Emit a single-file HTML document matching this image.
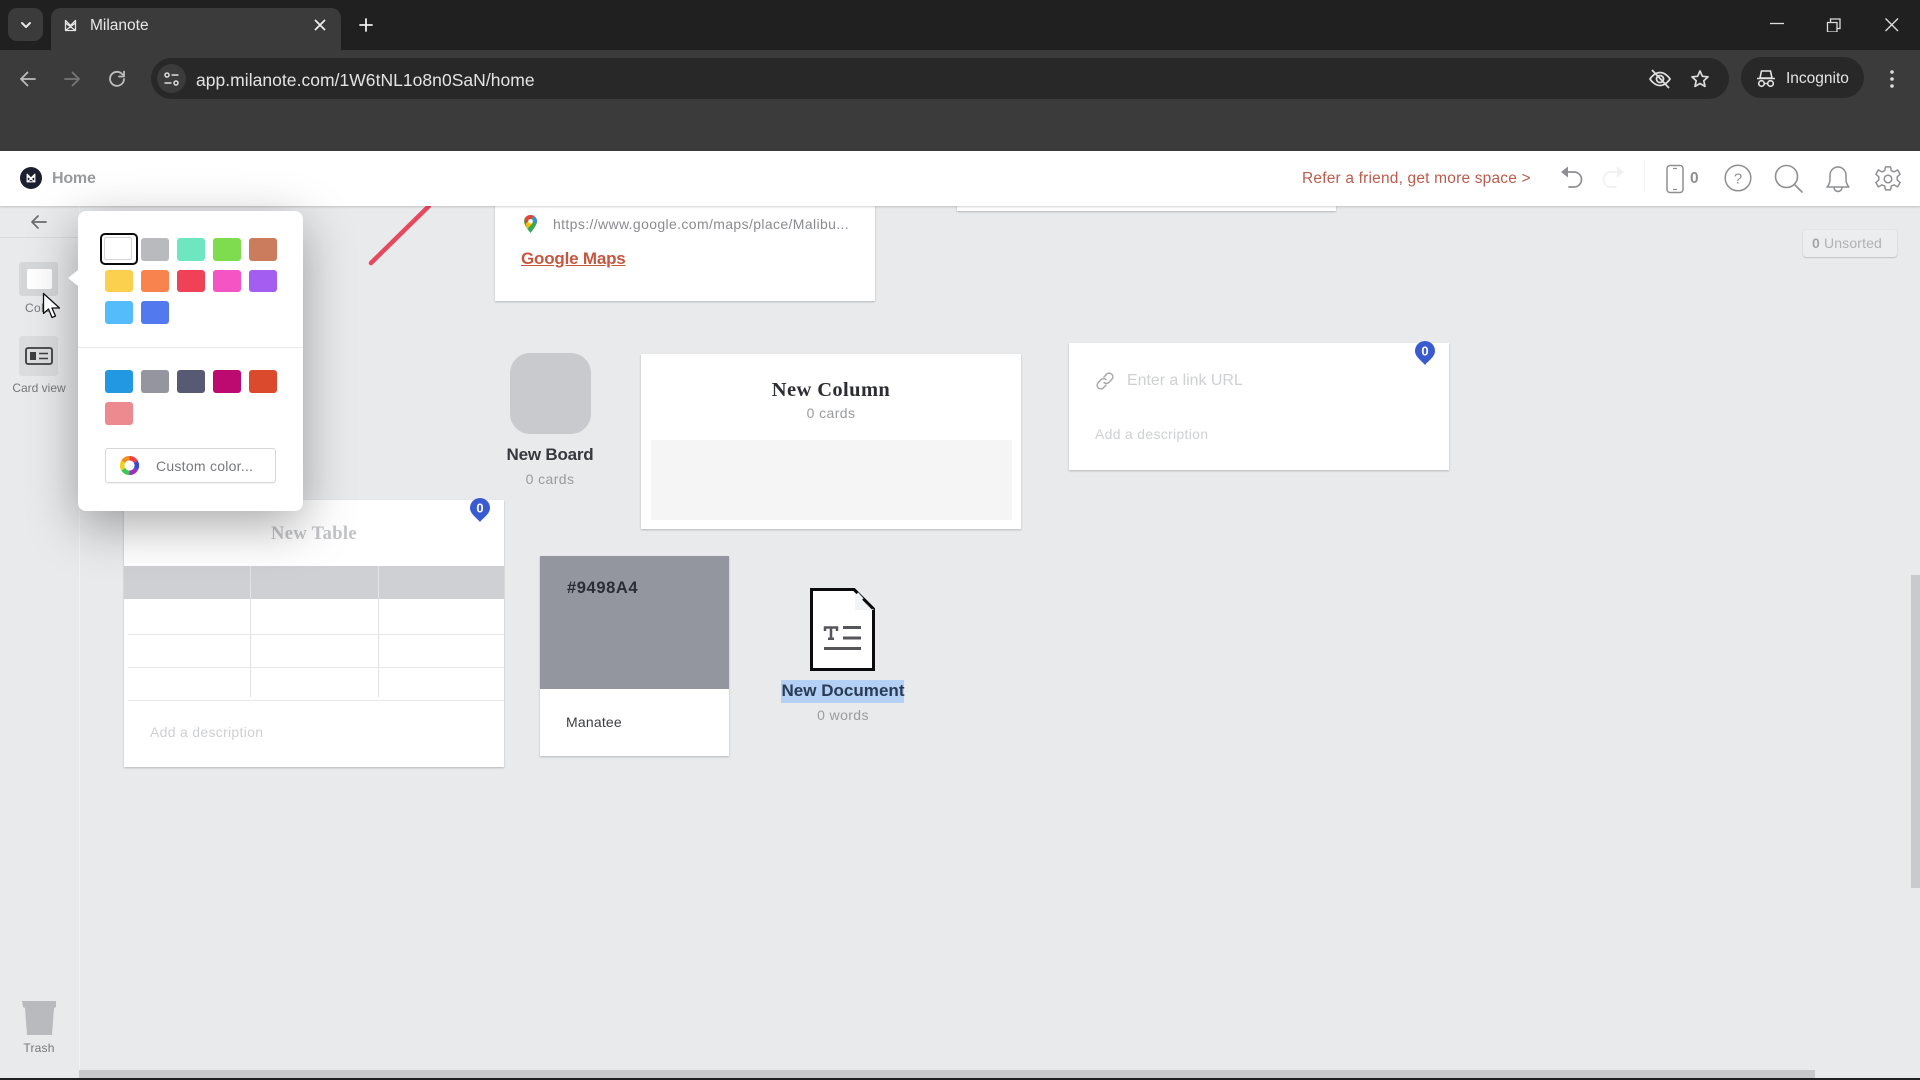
<!DOCTYPE html>
<html><head><meta charset="utf-8"><title>Milanote</title>
<style>
html,body{margin:0;padding:0;width:1920px;height:1080px;overflow:hidden;background:#e9eaec;font-family:"Liberation Sans",sans-serif}
div,span,svg{position:absolute;display:block}
.t{white-space:nowrap;line-height:20px;height:20px}
.c{text-align:center;width:300px}
.card{background:#fff;box-shadow:0 1px 2px rgba(0,0,0,.22)}
.s{width:28px;height:23px;border-radius:3px}
.sv{fill:none;stroke-linecap:round;stroke-linejoin:round}
</style></head><body>

<!-- browser chrome -->
<div style="left:0;top:0;width:1920px;height:50px;background:#202020"></div>
<div style="left:0;top:50px;width:1920px;height:101px;background:#3b3b3b"></div>
<div style="left:8px;top:8px;width:35px;height:33px;background:#3b3b3b;border-radius:9px"></div>
<div style="left:51px;top:8px;width:290px;height:44px;background:#3b3b3b;border-radius:10px 10px 0 0"></div>
<svg style="left:20px;top:19px" width="12" height="12" viewBox="0 0 12 12"><path class="sv" d="M2 4l4 4 4-4" stroke="#e6e6e6" stroke-width="2"/></svg>
<svg style="left:64px;top:19px" width="13" height="13" viewBox="0 0 13 13"><path class="sv" d="M1.500 11.500V1.500L6.500 6.500L11.500 1.500V11.500ZM1.500 11.500L11.500 4M11.500 11.500L1.500 4" stroke="#e6e6e6" stroke-width="1.300"/></svg>
<div class="t" style="left:90px;top:16px;font-size:15.500px;color:#e8e8e8">Milanote</div>
<svg style="left:313px;top:18px" width="14" height="14" viewBox="0 0 14 14"><path class="sv" d="M2.500 2.500l9 9M11.500 2.500l-9 9" stroke="#eee" stroke-width="1.800"/></svg>
<svg style="left:359px;top:18px" width="14" height="14" viewBox="0 0 14 14"><path class="sv" d="M7 1v12M1 7h12" stroke="#eee" stroke-width="1.800"/></svg>
<svg style="left:1770px;top:18px" width="130" height="14" viewBox="0 0 130 14"><path d="M0 5.500h14" stroke="#ddd" stroke-width="1.300" fill="none"/><path d="M57.500 4.500h9.500v9.500h-9.500zM60.500 4V1h9.500v9.500h-2.500" stroke="#ddd" stroke-width="1.300" fill="none"/><path d="M115.500 .5l12.500 12.500M128 .5l-12.500 12.500" stroke="#ddd" stroke-width="1.400" fill="none"/></svg>

<svg style="left:18px;top:69px" width="110" height="20" viewBox="0 0 110 20"><path class="sv" d="M17 10H3M9.500 3.500L3 10l6.500 6.500" stroke="#bdbdbd" stroke-width="1.800"/><path class="sv" d="M47 10h14M54.500 3.500L61 10l-6.500 6.500" stroke="#777" stroke-width="1.800"/><path class="sv" d="M104.500 5.500A7 7 0 1 0 106 10M106 2.500v5h-5" stroke="#bdbdbd" stroke-width="1.800"/></svg>

<div style="left:151px;top:58px;width:1578px;height:41px;background:#282828;border-radius:21px"></div>
<div style="left:157px;top:64px;width:29px;height:29px;background:#3b3b3b;border-radius:50%"></div>
<svg style="left:163px;top:71px" width="17" height="16" viewBox="0 0 17 16"><circle cx="4" cy="4" r="2" fill="none" stroke="#ddd" stroke-width="1.500"/><path d="M8.500 4h7M1.500 12h7" stroke="#ddd" stroke-width="1.500"/><circle cx="13" cy="12" r="2" fill="none" stroke="#ddd" stroke-width="1.500"/></svg>
<div class="t" style="left:196px;top:70px;font-size:17.500px;color:#e4e4e4;letter-spacing:.03px">app.milanote.com/1W6tNL1o8n0SaN/home</div>
<svg style="left:1648px;top:68px" width="24" height="22" viewBox="0 0 24 22"><path class="sv" d="M2 11s4-6.500 10-6.500S22 11 22 11s-4 6.500-10 6.500S2 11 2 11z" stroke="#ddd" stroke-width="1.800"/><circle cx="12" cy="11" r="3.500" fill="none" stroke="#ddd" stroke-width="1.800"/><path d="M4 2l17 18" stroke="#ddd" stroke-width="1.800"/></svg>
<svg style="left:1690px;top:69px" width="20" height="20" viewBox="0 0 20 20"><path class="sv" d="M10 2l2.400 5.300 5.600.6-4.200 3.800 1.200 5.700L10 14.500l-5 2.900 1.200-5.700L2 7.900l5.600-.6z" stroke="#ddd" stroke-width="1.700"/></svg>
<div style="left:1741px;top:57px;width:123px;height:41px;background:#282828;border-radius:21px"></div>
<svg style="left:1757px;top:69px" width="18" height="19" viewBox="0 0 18 19"><path d="M4.500 2h9l1.500 7H3z" fill="none" stroke="#e4e4e4" stroke-width="1.600"/><path d="M0 9.500h18" stroke="#e4e4e4" stroke-width="1.600"/><circle cx="4.500" cy="14.500" r="2.800" fill="none" stroke="#e4e4e4" stroke-width="1.600"/><circle cx="13.500" cy="14.500" r="2.800" fill="none" stroke="#e4e4e4" stroke-width="1.600"/><path d="M7.300 14.500h3.400" stroke="#e4e4e4" stroke-width="1.400"/></svg>
<div class="t" style="left:1786px;top:69px;font-size:15.500px;color:#e4e4e4">Incognito</div>
<svg style="left:1889px;top:69px" width="6" height="20" viewBox="0 0 6 20"><circle cx="3" cy="3" r="1.800" fill="#ddd"/><circle cx="3" cy="10" r="1.800" fill="#ddd"/><circle cx="3" cy="17" r="1.800" fill="#ddd"/></svg>

<!-- canvas items -->
<div style="left:79px;top:206px;width:1px;height:864px;background:#f2f3f4"></div>
<div style="left:0;top:237px;width:79px;height:1px;background:#d9dadc"></div>

<div class="card" style="left:957px;top:200px;width:379px;height:11px"></div>

<svg style="left:360px;top:200px" width="80" height="70" viewBox="0 0 80 70"><path d="M11 63L69 6" stroke="#e6485f" stroke-width="4.500" stroke-linecap="round" fill="none"/></svg>

<div class="card" style="left:495px;top:200px;width:380px;height:101px"></div>
<svg style="left:524px;top:215px" width="13" height="18" viewBox="0 0 13 18"><path d="M6.500 0C3 0 0 2.800 0 6.300 0 10.500 6.500 18 6.500 18S13 10.500 13 6.300C13 2.800 10 0 6.500 0z" fill="#3aa757"/><path d="M1 3.500C2 1.400 4 0 6.500 0c1.300 0 2.500.4 3.500 1L2 8.500C.8 7 .4 5 1 3.500z" fill="#ea4335"/><path d="M10 1c1.800 1.100 3 3 3 5.300 0 .8-.2 1.600-.5 2.400L8.500 5z" fill="#4285f4"/><path d="M2 8.500L6 5l3 3-6 6C2.500 11.700 2 10 2 8.500z" fill="#fbbc04"/><circle cx="6.500" cy="6.300" r="2.300" fill="#fff"/></svg>
<div class="t" style="left:553px;top:214px;font-size:14px;color:#8a8b8e;letter-spacing:.37px">https://www.google.com/maps/place/Malibu...</div>
<div class="t" style="left:521px;top:249px;font-size:17px;font-weight:bold;color:#c4573f;text-decoration:underline;letter-spacing:-.2px">Google Maps</div>

<div style="left:510px;top:353px;width:81px;height:81px;border-radius:20px;background:#c9cacd"></div>
<div class="t c" style="left:400px;top:445px;font-size:17px;font-weight:bold;color:#37383d;letter-spacing:-.2px">New Board</div>
<div class="t c" style="left:400px;top:469px;font-size:14px;color:#9a9b9e;letter-spacing:.4px">0 cards</div>

<div class="card" style="left:641px;top:354px;width:380px;height:175px"></div>
<div class="t c" style="left:681px;top:380px;font-family:'Liberation Serif',serif;font-size:20.500px;font-weight:bold;color:#2c2d33;letter-spacing:.4px">New Column</div>
<div class="t c" style="left:681px;top:403px;font-size:14px;color:#9a9b9e;letter-spacing:.4px">0 cards</div>
<div style="left:651px;top:440px;width:361px;height:80px;background:#f5f5f6"></div>

<div class="card" style="left:1069px;top:343px;width:380px;height:127px"></div>
<svg style="left:1095px;top:371px" width="20" height="20" viewBox="0 0 20 20"><path class="sv" d="M9 6l2.500-2.800a3.700 3.700 0 0 1 5.300 5.200L14 11.300a3.700 3.700 0 0 1-5 .2M11 14l-2.500 2.800a3.700 3.700 0 0 1-5.300-5.200L6 8.700a3.700 3.700 0 0 1 5-.2" stroke="#a9aaad" stroke-width="1.500"/></svg>
<div class="t" style="left:1127px;top:371px;font-size:16px;color:#cfd0d2;letter-spacing:-.05px">Enter a link URL</div>
<div class="t" style="left:1095px;top:424px;font-size:14px;color:#cfd0d2;letter-spacing:.3px">Add a description</div>
<svg style="left:1415px;top:341px" width="20" height="24" viewBox="0 0 20 24"><path d="M10 24C7 20 0 16 0 10a10 10 0 0 1 20 0c0 6-7 10-10 14z" fill="#3a5bd0"/><text x="10" y="14.500" text-anchor="middle" font-family="Liberation Sans" font-size="13" font-weight="bold" fill="#fff">0</text></svg>

<div class="card" style="left:124px;top:500px;width:380px;height:267px"></div>
<div class="t c" style="left:164px;top:524px;font-family:'Liberation Serif',serif;font-size:18.500px;font-weight:bold;color:#c3c4c7;letter-spacing:.35px">New Table</div>
<div style="left:124px;top:566px;width:380px;height:33px;background:#cfd0d3"></div>
<div style="left:250px;top:566px;width:1px;height:131px;background:#e2e3e4"></div>
<div style="left:378px;top:566px;width:1px;height:131px;background:#e2e3e4"></div>
<div style="left:128px;top:634px;width:376px;height:1px;background:#e6e7e8"></div>
<div style="left:128px;top:667px;width:376px;height:1px;background:#e6e7e8"></div>
<div style="left:128px;top:700px;width:376px;height:1px;background:#e6e7e8"></div>
<div class="t" style="left:150px;top:722px;font-size:14px;color:#cfd0d2;letter-spacing:.3px">Add a description</div>
<svg style="left:470px;top:498px" width="20" height="24" viewBox="0 0 20 24"><path d="M10 24C7 20 0 16 0 10a10 10 0 0 1 20 0c0 6-7 10-10 14z" fill="#3a5bd0"/><text x="10" y="14.500" text-anchor="middle" font-family="Liberation Sans" font-size="13" font-weight="bold" fill="#fff">0</text></svg>

<div class="card" style="left:540px;top:556px;width:189px;height:200px"></div>
<div style="left:540px;top:556px;width:189px;height:133px;background:#94969f"></div>
<div class="t" style="left:567px;top:578px;font-size:16.500px;font-weight:bold;color:#2b2d36;letter-spacing:.6px">#9498A4</div>
<div class="t" style="left:566px;top:712px;font-size:14px;color:#3c3d42;letter-spacing:.2px">Manatee</div>

<svg style="left:808px;top:586px" width="70" height="87" viewBox="0 0 70 87"><path d="M3.500 3.500H46L65.500 23V83.500H3.500Z" fill="#fff" stroke="#0c0c0e" stroke-width="3"/><path d="M47 3L47 24L66 24Z" fill="#f2f3f4"/><path d="M46 3.500L65.500 23" stroke="#0c0c0e" stroke-width="3" stroke-dasharray="5 8 14"/><path d="M17 45V41.500H29V45M23 41.500V52.500M20 52.800H26" stroke="#55565a" stroke-width="2.500" fill="none"/><path d="M35 41.500H53M35 52H53M16 62.500H53" stroke="#55565a" stroke-width="3" fill="none"/></svg>
<div style="left:781px;top:680px;width:123px;height:23px;background:#b4d0f5"></div>
<div class="t c" style="left:693px;top:681px;font-size:17px;font-weight:bold;color:#2a3b55;letter-spacing:.02px">New Document</div>
<div class="t c" style="left:693px;top:705px;font-size:14px;color:#9a9b9e;letter-spacing:.4px">0 words</div>

<div style="left:1803px;top:230px;width:94px;height:27px;background:#ecedef;border-radius:3px;box-shadow:0 1px 1px rgba(0,0,0,.15),0 0 0 1px #e3e4e6"></div>
<div class="t" style="left:1812px;top:233px;font-size:14px;color:#b0b1b4;letter-spacing:.15px"><b style="color:#a5a6a9">0</b> Unsorted</div>

<!-- scrollbars -->
<div style="left:1911px;top:575px;width:9px;height:313px;background:#c9cacd"></div>
<div style="left:79px;top:1070px;width:1736px;height:8px;background:#c8c9cb"></div>
<div style="left:0;top:1078px;width:1920px;height:2px;background:#202020"></div>

<!-- header -->
<div style="left:0;top:151px;width:1920px;height:55px;background:#fff;box-shadow:0 1px 2px rgba(0,0,0,.18)"></div>
<div style="left:20px;top:167px;width:22px;height:22px;border-radius:50%;background:#1c1f2e"></div>
<svg style="left:26px;top:173px" width="10" height="10" viewBox="0 0 13 13"><path class="sv" d="M1.500 11.500V1.500L6.500 6.500L11.500 1.500V11.500ZM1.500 11.500L11.500 4M11.500 11.500L1.500 4" stroke="#fff" stroke-width="1.500"/></svg>
<div class="t" style="left:52px;top:168.500px;font-size:16px;font-weight:bold;color:#9a9b9e;letter-spacing:-.2px">Home</div>
<div class="t" style="left:1302px;top:168.500px;font-size:15.500px;color:#bb5c4d;letter-spacing:.19px">Refer a friend, get more space &gt;</div>
<svg style="left:1558px;top:164px" width="26" height="28" viewBox="0 0 26 28"><path class="sv" d="M10 8h6a7.500 7.500 0 0 1 0 15h-5" stroke="#8e8f92" stroke-width="1.700"/><path d="M3 8l7-5.500v11z" fill="#8e8f92"/></svg>
<svg style="left:1601px;top:164px" width="26" height="28" viewBox="0 0 26 28"><path class="sv" d="M16 8h-6a7.500 7.500 0 0 0 0 15h5" stroke="#f0f0f1" stroke-width="1.700"/><path d="M23 8l-7-5.500v11z" fill="#f0f0f1"/></svg>
<div style="left:1644px;top:160px;width:1px;height:32px;background:#f4f4f5"></div>
<svg style="left:1665px;top:164px" width="20" height="30" viewBox="0 0 20 30"><rect x="2" y="1.500" width="16" height="27" rx="3" fill="none" stroke="#8e8f92" stroke-width="1.500"/><path d="M8 4.500h4M8 25.500h4" stroke="#8e8f92" stroke-width="1.200"/></svg>
<div class="t" style="left:1690px;top:169px;font-size:15.500px;font-weight:bold;color:#8e8f92">0</div>
<svg style="left:1724px;top:164px" width="28" height="28" viewBox="0 0 28 28"><circle cx="14" cy="14" r="12.800" fill="none" stroke="#8e8f92" stroke-width="1.500"/><text x="14" y="19.500" text-anchor="middle" font-family="Liberation Sans" font-size="15" fill="#8e8f92">?</text></svg>
<svg style="left:1774px;top:164px" width="30" height="30" viewBox="0 0 30 30"><circle cx="12.500" cy="12.500" r="11" fill="none" stroke="#8e8f92" stroke-width="1.600"/><path d="M20.500 20.500l7.500 7.500" stroke="#8e8f92" stroke-width="1.600" stroke-linecap="round"/></svg>
<svg style="left:1824px;top:164px" width="28" height="30" viewBox="0 0 28 30"><path class="sv" d="M3 23c2-2 3-4 3-8V11a8 8 0 0 1 16 0v4c0 4 1 6 3 8z" stroke="#8e8f92" stroke-width="1.500"/><path class="sv" d="M10 23.500a4 4 0 0 0 8 0" stroke="#8e8f92" stroke-width="1.500"/></svg>
<svg style="left:1874px;top:164px" width="28" height="30" viewBox="0 0 28 30"><path class="sv" d="M11.500 2h5l.8 3.800 2.800 1.200 3.500-2 2.500 4.300-2.900 2.600v3.200l2.900 2.600-2.500 4.300-3.500-2-2.800 1.200-.8 3.800h-5l-.8-3.800-2.800-1.200-3.500 2-2.500-4.300 2.900-2.600v-3.200L1.900 9.300l2.500-4.300 3.500 2 2.800-1.200z" transform="translate(0,.9)" stroke="#8e8f92" stroke-width="1.500"/><circle cx="14" cy="15" r="3.800" fill="none" stroke="#8e8f92" stroke-width="1.500"/></svg>

<!-- left sidebar -->
<svg style="left:30px;top:214px" width="18" height="16" viewBox="0 0 18 16"><path class="sv" d="M16 8H2M8 2L2 8l6 6" stroke="#6c6d70" stroke-width="1.700"/></svg>
<div style="left:19px;top:262px;width:39px;height:34px;background:#d6d7d9;border-radius:3px"></div>
<div style="left:27px;top:269px;width:25px;height:20px;background:#fff;border-radius:2px"></div>
<div class="t" style="left:25px;top:298px;font-size:12px;color:#77787b;letter-spacing:.3px">Color</div>
<div style="left:19px;top:336px;width:39px;height:40px;background:#dcdddf;border-radius:3px"></div>
<svg style="left:25px;top:347px" width="28" height="18" viewBox="0 0 28 18"><rect x="1" y="1" width="26" height="16" rx="2" fill="none" stroke="#3d3e42" stroke-width="1.800"/><rect x="5" y="5" width="6" height="8" fill="#3d3e42"/><path d="M14 6.500h9M14 11.500h9" stroke="#3d3e42" stroke-width="1.600"/></svg>
<div class="t c" style="left:-111px;top:378px;font-size:12px;color:#77787b;letter-spacing:0">Card view</div>
<svg style="left:21px;top:999px" width="36" height="37" viewBox="0 0 36 37"><path d="M1 2h34v6l-2 1-2 27H6L4 9 2 8z" fill="#b9babd"/></svg>
<div class="t c" style="left:-111px;top:1038px;font-size:12px;color:#77787b;letter-spacing:.2px">Trash</div>

<!-- popup -->
<div style="left:78px;top:211px;width:225px;height:300px;background:#fff;border-radius:8px;box-shadow:0 14px 50px rgba(0,0,0,.34)"></div>
<div style="left:68px;top:270px;width:0;height:0;border:8px solid transparent;border-left:0;border-right:10px solid #fff"></div>
<div style="left:100px;top:233px;width:34px;height:28px;border:2px solid #0c0c0e;border-radius:5px;background:#fff"></div>
<div style="left:104px;top:237px;width:28px;height:23px;border:1px solid #d4d5d6;border-radius:2px;box-sizing:border-box;background:#fff"></div>
<div class="s" style="left:141px;top:238px;background:#b9babd"></div>
<div class="s" style="left:177px;top:238px;background:#6ee7c0"></div>
<div class="s" style="left:213px;top:238px;background:#7fdc4f"></div>
<div class="s" style="left:249px;top:238px;background:#cb7c5c"></div>
<div class="s" style="left:105px;top:270px;background:#fbd04e;height:22px"></div>
<div class="s" style="left:141px;top:270px;background:#f8834d;height:22px"></div>
<div class="s" style="left:177px;top:270px;background:#ef4257;height:22px"></div>
<div class="s" style="left:213px;top:270px;background:#f554c4;height:22px"></div>
<div class="s" style="left:249px;top:270px;background:#a35df0;height:22px"></div>
<div class="s" style="left:105px;top:301px;background:#55bcfb"></div>
<div class="s" style="left:141px;top:301px;background:#5379ef"></div>
<div style="left:78px;top:347px;width:225px;height:1px;background:#e8e9ea"></div>
<div class="s" style="left:105px;top:370px;background:#2298e3"></div>
<div class="s" style="left:141px;top:370px;background:#94959f"></div>
<div class="s" style="left:177px;top:370px;background:#585a74"></div>
<div class="s" style="left:213px;top:370px;background:#bc0a71"></div>
<div class="s" style="left:249px;top:370px;background:#dc4a2e"></div>
<div class="s" style="left:105px;top:402px;background:#ec8a90"></div>
<div style="left:105px;top:448px;width:171px;height:35px;box-sizing:border-box;border:1px solid #d6d7d8;border-radius:3px;box-shadow:0 1px 1px rgba(0,0,0,.06)"></div>
<svg style="left:120px;top:456px" width="19" height="19" viewBox="0 0 19 19"><g fill="none" stroke-width="4.500"><path d="M9.500 2.200A7.300 7.300 0 0 1 15.800 5.800" stroke="#f04040"/><path d="M15.800 5.800A7.300 7.300 0 0 1 15.800 13.200" stroke="#3848d8"/><path d="M15.800 13.200A7.300 7.300 0 0 1 9.500 16.800" stroke="#9a30c0"/><path d="M9.500 16.800A7.300 7.300 0 0 1 3.200 13.200" stroke="#40c850"/><path d="M3.200 13.200A7.300 7.300 0 0 1 3.200 5.800" stroke="#f0d020"/><path d="M3.200 5.800A7.300 7.300 0 0 1 9.500 2.200" stroke="#f09020"/></g></svg>
<div class="t" style="left:156px;top:456px;font-size:14px;color:#77787b;letter-spacing:.26px">Custom color...</div>

<!-- cursor -->
<svg style="left:42px;top:292px" width="20" height="28" viewBox="0 0 20 28"><path d="M1.500 1.500V21.500L6.500 17L10 25.500L13.500 24L10 16H17.500Z" fill="#fff" stroke="#111" stroke-width="1.300" stroke-linejoin="round"/></svg>

</body></html>
